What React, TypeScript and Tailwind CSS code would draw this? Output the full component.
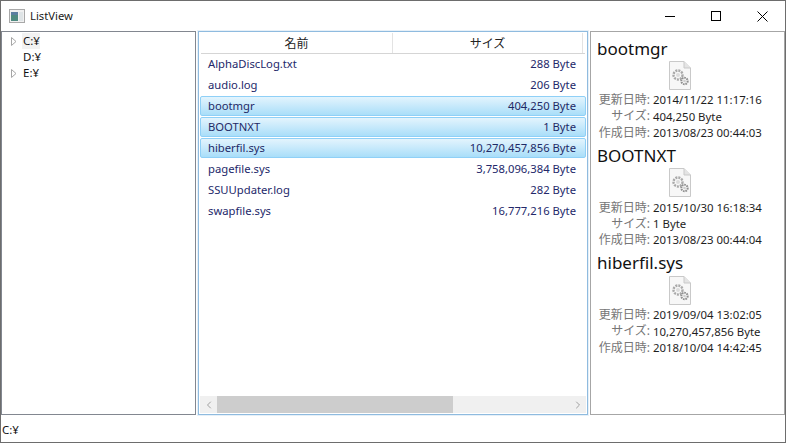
import { ChevronLeft, ChevronRight } from 'lucide-react'

const FILES = [
  { name: 'AlphaDiscLog.txt', size: '288 Byte', selected: false },
  { name: 'audio.log', size: '206 Byte', selected: false },
  { name: 'bootmgr', size: '404,250 Byte', selected: true },
  { name: 'BOOTNXT', size: '1 Byte', selected: true },
  { name: 'hiberfil.sys', size: '10,270,457,856 Byte', selected: true },
  { name: 'pagefile.sys', size: '3,758,096,384 Byte', selected: false },
  { name: 'SSUUpdater.log', size: '282 Byte', selected: false },
  { name: 'swapfile.sys', size: '16,777,216 Byte', selected: false },
]

const DETAILS = [
  { name: 'bootmgr', updated: '2014/11/22 11:17:16', size: '404,250 Byte', created: '2013/08/23 00:44:03' },
  { name: 'BOOTNXT', updated: '2015/10/30 16:18:34', size: '1 Byte', created: '2013/08/23 00:44:04' },
  { name: 'hiberfil.sys', updated: '2019/09/04 13:02:05', size: '10,270,457,856 Byte', created: '2018/10/04 14:42:45' },
]

const DRIVES = [
  { name: 'C:¥', expandable: true, focused: true },
  { name: 'D:¥', expandable: false, focused: false },
  { name: 'E:¥', expandable: true, focused: false },
]

function FileIcon() {
  return (
    <svg width="22" height="29" viewBox="0 0 22 29" className="block">
      <path d="M0.5 0.5H15L21.5 7V28.5H0.5Z" fill="#f7f7f7" stroke="#c9c9c9" />
      <path d="M15 0.5V7H21.5" fill="#e4e4e4" stroke="#c9c9c9" />
      <circle cx="9" cy="14" r="4.5" fill="none" stroke="#a9a9a9" strokeWidth="2.4" strokeDasharray="2 1" />
      <circle cx="9" cy="14" r="2" fill="#dcdcdc" />
      <circle cx="15.5" cy="20" r="3.2" fill="none" stroke="#8f8f8f" strokeWidth="2" strokeDasharray="1.6 0.8" />
      <circle cx="15.5" cy="20" r="1.3" fill="#cfcfcf" />
    </svg>
  )
}

function DetailRow({ label, value }: { label: string; value: string }) {
  return (
    <div className="flex h-[16.3px] items-center">
      <span className="w-[53px] shrink-0 text-right text-[12px] text-[#767676]">{label}:</span>
      <span className="ml-[3px] text-[11.4px] text-[#1e1e1e]">{value}</span>
    </div>
  )
}

export default function App() {
  return (
    <div className="flex h-[443px] w-[786px] flex-col overflow-hidden border border-[#6d6d6d] bg-white text-[12px] leading-none text-black [font-family:'Noto_Sans','Noto_Sans_CJK_JP',sans-serif]">
      {/* title bar */}
      <div className="flex h-[30px] shrink-0 items-center">
        <svg width="16" height="14" viewBox="0 0 16 14" className="ml-[8px]">
          <rect x="0.5" y="0.5" width="15" height="13" fill="#f0f0f0" stroke="#a8a8a8" />
          <rect x="2" y="3" width="7" height="9" fill="#4f8a80" />
          <rect x="2" y="3" width="7" height="3" fill="#5b7ea0" />
          <rect x="10" y="3" width="4" height="9" fill="#dfe4e6" />
        </svg>
        <span className="ml-[5px] text-[11.25px] text-[#1a1a1a]">ListView</span>
        <div className="ml-auto flex h-full items-center">
          <div className="flex h-full w-[46px] items-center justify-center">
            <div className="h-px w-[10px] bg-black" />
          </div>
          <div className="flex h-full w-[46px] items-center justify-center">
            <div className="h-[10px] w-[10px] border border-black" />
          </div>
          <div className="flex h-full w-[46px] items-center justify-center">
            <svg width="11" height="11" viewBox="0 0 11 11">
              <path d="M0.5 0.5L10.5 10.5M10.5 0.5L0.5 10.5" stroke="#000" fill="none" />
            </svg>
          </div>
        </div>
      </div>

      <div className="flex h-[384px] shrink-0">
        {/* drive tree */}
        <div className="w-[195px] shrink-0 border border-[#828790] pt-[1px]">
          {DRIVES.map((d) => (
            <div key={d.name} className="flex h-[16px] items-center">
              <div className="flex w-[18px] justify-center pl-[5px]">
                {d.expandable && (
                  <svg width="6" height="9" viewBox="0 0 6 9">
                    <path d="M0.5 0.5L5 4.5L0.5 8.5Z" fill="#fff" stroke="#a6a6a6" />
                  </svg>
                )}
              </div>
              <span
                className={
                  d.focused
                    ? 'ml-[2px] flex h-full w-[18px] items-center bg-[#f2f2f2] pl-px text-[11.5px] text-[#111]'
                    : 'ml-[2px] pl-px text-[11.5px] text-[#111]'
                }
              >
                {d.name}
              </span>
            </div>
          ))}
        </div>

        {/* file list */}
        <div className="ml-[2px] flex w-[390px] shrink-0 flex-col border border-[#8fbbdf] p-px shadow-[0_0_0_1px_#e6f0f8]">
          <div className="mx-px flex h-[21px] shrink-0 items-center border-b border-[#d5d5d5] text-[#222]">
            <div className="flex h-full w-[192px] items-center justify-center border-r border-[#e3e3e3] pt-px">名前</div>
            <div className="flex h-full w-[190px] items-center justify-center border-r border-[#e3e3e3] pt-px">サイズ</div>
          </div>
          <div className="min-h-0 flex-1 text-[11.25px]">
            {FILES.map((f) => (
              <div
                key={f.name}
                className={
                  f.selected
                    ? 'mb-px flex h-[20px] items-center justify-between rounded-[2px] border border-[#8fd0f7] bg-gradient-to-b from-[#e3f4fd] to-[#a9def9] pl-[7px] pr-[9px] text-[#1f2a66]'
                    : 'flex h-[21px] items-center justify-between pb-px pl-[8px] pr-[10px] text-[#23286a]'
                }
              >
                <span>{f.name}</span>
                <span>{f.size}</span>
              </div>
            ))}
          </div>
          <div className="flex h-[17px] shrink-0 items-center bg-[#f0f0f0]">
            <div className="flex w-[17px] justify-center text-[#a0a0a0]">
              <ChevronLeft size={12} strokeWidth={2} />
            </div>
            <div className="h-full w-[236px] bg-[#cdcdcd]" />
            <div className="ml-auto flex w-[17px] justify-center text-[#a0a0a0]">
              <ChevronRight size={12} strokeWidth={2} />
            </div>
          </div>
        </div>

        {/* detail panel */}
        <div className="ml-[2px] w-[195px] shrink-0 border border-[#a6a6a6] pl-[6px] pt-[5px]">
          {DETAILS.map((d) => (
            <div key={d.name} className="mb-[3.5px]">
              <div className="flex h-[22px] items-center text-[17px] text-[#111]">{d.name}</div>
              <div className="mt-[2px] flex h-[30px] w-[166px] justify-center">
                <FileIcon />
              </div>
              <div className="mt-[1px]">
                <DetailRow label="更新日時" value={d.updated} />
                <DetailRow label="サイズ" value={d.size} />
                <DetailRow label="作成日時" value={d.created} />
              </div>
            </div>
          ))}
        </div>
      </div>

      {/* status bar */}
      <div className="flex flex-1 items-center pl-px pt-[2px] text-[11.5px] text-[#111]">C:¥</div>
    </div>
  )
}
